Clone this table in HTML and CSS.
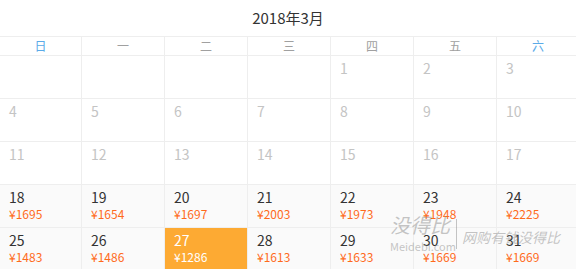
FILE: index.html
```html
<!DOCTYPE html>
<html lang="zh-CN">
<head>
<meta charset="utf-8">
<title>2018年3月</title>
<link rel="stylesheet" href="styles.css">
</head>
<body>
<div class="page">
  <div class="title">2018年3月</div>
  <div class="grid">
    <div class="wd blue">日</div>
    <div class="wd">一</div>
    <div class="wd">二</div>
    <div class="wd">三</div>
    <div class="wd">四</div>
    <div class="wd">五</div>
    <div class="wd blue">六</div>

    <div class="day"></div>
    <div class="day"></div>
    <div class="day"></div>
    <div class="day"></div>
    <div class="day past"><span class="num">1</span></div>
    <div class="day past"><span class="num">2</span></div>
    <div class="day past"><span class="num">3</span></div>

    <div class="day past"><span class="num">4</span></div>
    <div class="day past"><span class="num">5</span></div>
    <div class="day past"><span class="num">6</span></div>
    <div class="day past"><span class="num">7</span></div>
    <div class="day past"><span class="num">8</span></div>
    <div class="day past"><span class="num">9</span></div>
    <div class="day past"><span class="num">10</span></div>

    <div class="day past"><span class="num">11</span></div>
    <div class="day past"><span class="num">12</span></div>
    <div class="day past"><span class="num">13</span></div>
    <div class="day past"><span class="num">14</span></div>
    <div class="day past"><span class="num">15</span></div>
    <div class="day past"><span class="num">16</span></div>
    <div class="day past"><span class="num">17</span></div>

    <div class="day avail"><span class="num">18</span><span class="price">¥1695</span></div>
    <div class="day avail"><span class="num">19</span><span class="price">¥1654</span></div>
    <div class="day avail"><span class="num">20</span><span class="price">¥1697</span></div>
    <div class="day avail"><span class="num">21</span><span class="price">¥2003</span></div>
    <div class="day avail"><span class="num">22</span><span class="price">¥1973</span></div>
    <div class="day avail"><span class="num">23</span><span class="price">¥1948</span></div>
    <div class="day avail"><span class="num">24</span><span class="price">¥2225</span></div>

    <div class="day avail"><span class="num">25</span><span class="price">¥1483</span></div>
    <div class="day avail"><span class="num">26</span><span class="price">¥1486</span></div>
    <div class="day avail selected"><span class="num">27</span><span class="price">¥1286</span></div>
    <div class="day avail"><span class="num">28</span><span class="price">¥1613</span></div>
    <div class="day avail"><span class="num">29</span><span class="price">¥1633</span></div>
    <div class="day avail"><span class="num">30</span><span class="price">¥1669</span></div>
    <div class="day avail"><span class="num">31</span><span class="price">¥1669</span></div>
  </div>
  <div class="watermark">
    <div class="wm-left">
      <span class="wm-big">没得比</span>
      <span class="wm-small">Meidebi.com</span>
    </div>
    <span class="wm-bar"></span>
    <span class="wm-slogan">网购有钱没得比</span>
  </div>
</div>
</body>
</html>
```
FILE: styles.css
```css
html, body {
  margin: 0;
  padding: 0;
  background: #fff;
}
body {
  width: 576px;
  height: 269px;
  overflow: hidden;
  font-family: "Noto Sans CJK SC", "Noto Sans", sans-serif;
}
.page {
  position: relative;
  width: 576px;
  height: 269px;
  overflow: hidden;
}
.title {
  height: 36px;
  line-height: 35px;
  text-align: center;
  font-size: 15px;
  color: #333;
}
.grid {
  display: grid;
  width: 579px;
  grid-template-columns: 81px repeat(6, 82px);
  grid-template-rows: 18px repeat(5, 42px);
  gap: 1px;
  padding-top: 1px;
  background: #eeeeee;
}
.wd {
  background: #fff;
  text-align: center;
  font-size: 12px;
  line-height: 18px;
  color: #a0a0a0;
}
.wd.blue {
  color: #5aaae8;
}
.day {
  background: #fff;
  display: flex;
  flex-direction: column;
  padding: 4px 0 0 9px;
}
.num {
  font-size: 14px;
  line-height: 17px;
  color: #333;
}
.past .num {
  color: #c4c4c4;
}
.avail {
  background: #fafafa;
}
.price {
  font-size: 12px;
  line-height: 15px;
  color: #ff6a1c;
}
.selected {
  background: #fdaa33;
}
.selected .num,
.selected .price {
  color: #fff;
}
.watermark {
  position: absolute;
  left: 390px;
  top: 214px;
  display: flex;
  align-items: center;
  gap: 5px;
  color: rgba(140, 140, 140, 0.5);
  pointer-events: none;
}
.wm-left {
  display: flex;
  flex-direction: column;
  align-items: flex-start;
  width: 61px;
}
.wm-big {
  font-size: 20px;
  line-height: 22px;
  font-style: italic;
  letter-spacing: 0px;
}
.wm-small {
  font-size: 11px;
  line-height: 14px;
  margin-top: 3px;
}
.wm-bar {
  width: 1px;
  height: 30px;
  background: rgba(140, 140, 140, 0.5);
}
.wm-slogan {
  font-size: 14px;
  font-style: italic;
  margin-top: 6px;
}
```
